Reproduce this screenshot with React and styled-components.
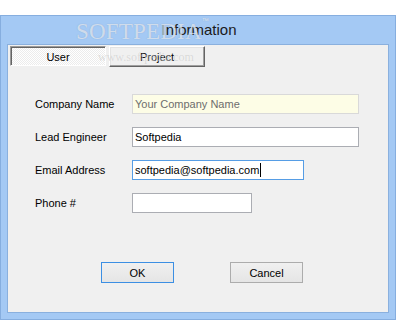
import React from "react";
import styled, { createGlobalStyle } from "styled-components";

const Global = createGlobalStyle`
  html, body { margin: 0; padding: 0; background: #ffffff; }
  body { font-family: "Liberation Sans", Arial, sans-serif; }
  * { box-sizing: border-box; }
`;

const Page = styled.div`
  width: 396px;
  height: 320px;
  padding-top: 15px;
  overflow: hidden;
`;

const Window = styled.div`
  position: relative;
  width: 396px;
  height: 305px;
  border: 1px solid #86aedf;
  background: #a4c9f4;
  padding: 0 6px 6px 6px;
  display: flex;
  flex-direction: column;
`;

const TitleBar = styled.div`
  height: 28px;
  display: flex;
  align-items: center;
  justify-content: center;
  font-size: 15px;
  color: #1b1b1b;
  padding-left: 2px;
  padding-bottom: 1px;
`;

const Watermark = styled.div`
  position: absolute;
  left: 75px;
  top: 3px;
  font-family: "Liberation Serif", "Times New Roman", serif;
  font-size: 23px;
  letter-spacing: 0.2px;
  color: rgba(255, 255, 255, 0.6);
  text-shadow: 0 0 1px rgba(90, 110, 140, 0.4);
  pointer-events: none;
  sup {
    font-family: "Liberation Sans", Arial, sans-serif;
    font-size: 7px;
    vertical-align: top;
    position: relative;
    top: -2px;
    color: rgba(255, 255, 255, 0.7);
  }
`;

const WatermarkUrl = styled.div`
  position: absolute;
  left: 97px;
  top: 34px;
  font-family: "Liberation Serif", "Times New Roman", serif;
  font-size: 12px;
  color: rgba(160, 160, 160, 0.35);
  text-shadow: 0 0 1px rgba(255, 255, 255, 0.6);
  pointer-events: none;
`;

const Client = styled.div`
  flex: 1;
  border: 1px solid #8ab0de;
  background: #f0f0f0;
  display: flex;
  flex-direction: column;
`;

const Tabs = styled.div`
  display: flex;
  gap: 3px;
  margin: 1px 0 0 2px;
`;

const Tab = styled.div`
  width: 96px;
  height: ${(p) => (p.$active ? 20 : 21)}px;
  display: flex;
  align-items: center;
  justify-content: center;
  font-size: 11px;
  color: #000;
  border: 1px solid;
  ${(p) =>
    p.$active
      ? `
    border-color: #9a9a9a #ffffff #ffffff #9a9a9a;
    box-shadow: inset 1px 1px 0 #646464;
    background: repeating-conic-gradient(#ffffff 0 25%, #ececec 0 50%) 0 0 / 2px 2px;
    padding-top: 1px;
  `
      : `
    border-color: #ffffff #646464 #646464 #ffffff;
    box-shadow: inset -1px -1px 0 #a0a0a0, inset 1px 1px 0 #e3e3e3;
    background: #f0f0f0;
  `}
`;

const Form = styled.div`
  display: grid;
  grid-template-columns: 97px auto;
  row-gap: 13px;
  margin: 27px 0 0 27px;
  align-items: center;
`;

const Label = styled.div`
  font-size: 11px;
  color: #000;
  height: 20px;
  line-height: 20px;
`;

const Field = styled.div`
  width: ${(p) => p.$w}px;
  height: 20px;
  border: 1px solid ${(p) => (p.$focus ? "#569de5" : p.$readonly ? "#d9d9d9" : "#abadb3")};
  background: ${(p) => (p.$readonly ? "#fdfde6" : "#ffffff")};
  color: ${(p) => (p.$readonly ? "#6d6d6d" : "#000000")};
  font-size: 11px;
  padding-left: 2px;
  display: flex;
  align-items: center;
  white-space: nowrap;
`;

const Caret = styled.span`
  display: inline-block;
  width: 1px;
  height: 14px;
  background: #000;
  margin-left: 1px;
`;

const Buttons = styled.div`
  display: flex;
  gap: 56px;
  margin: 49px 0 0 93px;
`;

const Button = styled.div`
  width: 73px;
  height: 21px;
  display: flex;
  align-items: center;
  justify-content: center;
  font-size: 11px;
  color: #000;
  border: 1px solid ${(p) => (p.$default ? "#3c8fe3" : "#acacac")};
  background: linear-gradient(#f0f0f0, #e5e5e5);
`;

export default function App() {
  return (
    <Page>
      <Global />
      <Window>
        <Watermark>
          SOFTPEDIA<sup>™</sup>
        </Watermark>
        <TitleBar>Information</TitleBar>
        <Client>
          <Tabs>
            <Tab $active>User</Tab>
            <Tab>Project</Tab>
          </Tabs>
          <Form>
            <Label>Company Name</Label>
            <Field $w={227} $readonly>Your Company Name</Field>
            <Label>Lead Engineer</Label>
            <Field $w={227}>Softpedia</Field>
            <Label>Email Address</Label>
            <Field $w={172} $focus>
              softpedia@softpedia.com
              <Caret />
            </Field>
            <Label>Phone #</Label>
            <Field $w={120} />
          </Form>
          <Buttons>
            <Button $default>OK</Button>
            <Button>Cancel</Button>
          </Buttons>
        </Client>
        <WatermarkUrl>www.softpedia.com</WatermarkUrl>
      </Window>
    </Page>
  );
}
